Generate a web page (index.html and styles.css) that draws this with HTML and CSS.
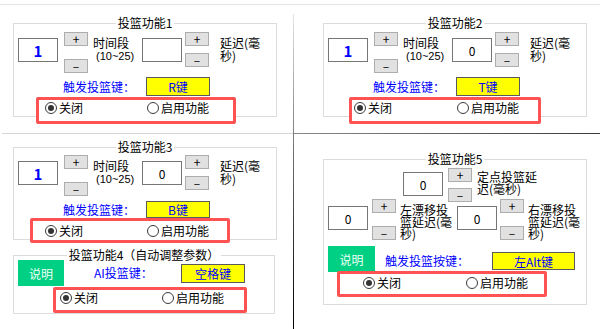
FILE: index.html
```html
<!DOCTYPE html>
<html lang="zh-CN">
<head>
    <meta charset="UTF-8">
    <title>投篮功能</title>
    <link rel="stylesheet" href="styles.css">
</head>
<body>
    <div class="topline"></div>
    <div class="board">
        <div class="cell cell-a">
            <fieldset class="group g1">
                <legend class="title">投篮功能1</legend>
                <div class="spin-row">
                    <div class="num hi">1</div>
                    <div class="spin"><div class="btn">+</div><div class="btn">–</div></div>
                    <div class="lbl">时间段<span class="range">(10~25)</span></div>
                    <div class="num n2"></div>
                    <div class="spin s2"><div class="btn">+</div><div class="btn">–</div></div>
                    <div class="lbl l2">延迟(毫秒)</div>
                </div>
                <div class="trig">
                    <span class="trig-lbl">触发投篮键：</span>
                    <span class="key">R键</span>
                </div>
                <div class="opts">
                    <label class="opt first"><span class="radio on"></span>关闭</label>
                    <label class="opt"><span class="radio"></span>启用功能</label>
                </div>
            </fieldset>
        </div>

        <div class="vline"></div>

        <div class="cell cell-b">
            <fieldset class="group g2">
                <legend class="title">投篮功能2</legend>
                <div class="spin-row">
                    <div class="num hi">1</div>
                    <div class="spin"><div class="btn">+</div><div class="btn">–</div></div>
                    <div class="lbl">时间段<span class="range">(10~25)</span></div>
                    <div class="num n2">0</div>
                    <div class="spin s2"><div class="btn">+</div><div class="btn">–</div></div>
                    <div class="lbl l2">延迟(毫秒)</div>
                </div>
                <div class="trig">
                    <span class="trig-lbl">触发投篮键：</span>
                    <span class="key">T键</span>
                </div>
                <div class="opts">
                    <label class="opt first"><span class="radio on"></span>关闭</label>
                    <label class="opt"><span class="radio"></span>启用功能</label>
                </div>
            </fieldset>
        </div>

        <div class="hline-l"></div>
        <div class="hline-r"></div>

        <div class="cell cell-c">
            <fieldset class="group g3">
                <legend class="title">投篮功能3</legend>
                <div class="spin-row">
                    <div class="num hi">1</div>
                    <div class="spin"><div class="btn">+</div><div class="btn">–</div></div>
                    <div class="lbl">时间段<span class="range">(10~25)</span></div>
                    <div class="num n2">0</div>
                    <div class="spin s2"><div class="btn">+</div><div class="btn">–</div></div>
                    <div class="lbl l2">延迟(毫秒)</div>
                </div>
                <div class="trig">
                    <span class="trig-lbl">触发投篮键：</span>
                    <span class="key">B键</span>
                </div>
                <div class="opts">
                    <label class="opt first"><span class="radio on"></span>关闭</label>
                    <label class="opt"><span class="radio"></span>启用功能</label>
                </div>
            </fieldset>

            <fieldset class="group g4">
                <legend class="title">投篮功能4（自动调整参数）</legend>
                <div class="help-row">
                    <span class="help">说明</span>
                    <span class="trig-lbl">AI投篮键：</span>
                    <span class="key">空格键</span>
                </div>
                <div class="opts">
                    <label class="opt first"><span class="radio on"></span>关闭</label>
                    <label class="opt"><span class="radio"></span>启用功能</label>
                </div>
            </fieldset>
        </div>

        <div class="cell cell-d">
            <fieldset class="group g5">
                <legend class="title">投篮功能5</legend>
                <div class="spin-row row-a">
                    <div class="num">0</div>
                    <div class="spin"><div class="btn">+</div><div class="btn">–</div></div>
                    <div class="lbl">定点投篮延迟(毫秒)</div>
                </div>
                <div class="spin-row row-b">
                    <div class="num">0</div>
                    <div class="spin"><div class="btn">+</div><div class="btn">–</div></div>
                    <div class="lbl">左漂移投篮延迟(毫秒)</div>
                    <div class="num n2">0</div>
                    <div class="spin s2"><div class="btn">+</div><div class="btn">–</div></div>
                    <div class="lbl l2">右漂移投篮延迟(毫秒)</div>
                </div>
                <div class="help-row">
                    <span class="help">说明</span>
                    <span class="trig-lbl">触发投篮按键：</span>
                    <span class="key">左Alt键</span>
                </div>
                <div class="opts">
                    <label class="opt first"><span class="radio on"></span>关闭</label>
                    <label class="opt"><span class="radio"></span>启用功能</label>
                </div>
            </fieldset>
        </div>
    </div>
</body>
</html>
```

FILE: styles.css
```css
* {
    box-sizing: border-box;
}

body {
    margin: 0;
    width: 600px;
    height: 329px;
    overflow: hidden;
    background-color: #ffffff;
    color: #000000;
    font-family: "Noto Sans CJK SC", "Noto Sans", sans-serif;
    font-size: 12px;
}

.topline {
    height: 1px;
    margin-top: 4px;
    background-color: #e4e4e4;
}

.board {
    display: grid;
    grid-template-columns: 293px 1px 306px;
    grid-template-rows: 128px 1px 195px;
}

.vline {
    grid-column: 2;
    grid-row: 1 / 4;
    margin-top: 9px;
    background: linear-gradient(#e4e4e4, #7a7a7a 40%, #2a2a2a 75%, #000000);
}

.hline-l {
    grid-column: 1;
    grid-row: 2;
    margin-left: 2px;
    background-color: #d6d6d6;
}

.hline-r {
    grid-column: 3;
    grid-row: 2;
    background: linear-gradient(to right, #8a8a8a, #3a3a3a);
}

.cell {
    display: flex;
    flex-direction: column;
    align-items: flex-start;
}

.cell-a { grid-column: 1; grid-row: 1; }
.cell-b { grid-column: 3; grid-row: 1; }
.cell-c { grid-column: 1; grid-row: 3; }
.cell-d { grid-column: 3; grid-row: 3; }

/* group box */
.group {
    margin: 0;
    padding: 0;
    min-width: 0;
    width: 264px;
    border: 1px solid #dcdcdc;
    display: flex;
    flex-direction: column;
    align-items: flex-start;
}

.title {
    margin: 0 auto;
    padding: 0 2px;
    line-height: 12px;
    font-size: 12px;
}

.g1 { margin: 12px 0 0 13px; }
.g2 { margin: 12px 0 0 29px; }
.g3 { margin: 7px 0 0 13px; }
.g4 { margin: 9px 0 0 13px; width: 262px; }
.g5 { margin: 19px 0 0 29px; padding-bottom: 7px; }

/* number + spinner rows */
.spin-row {
    display: flex;
    align-items: flex-start;
    margin: 3px 0 0 4px;
}

.g3 .spin-row {
    margin-top: 2px;
}

.num {
    width: 40px;
    height: 24px;
    margin-top: 6px;
    border: 1px solid #767676;
    display: flex;
    align-items: center;
    justify-content: center;
    font-size: 12px;
}

.num.hi {
    color: #0000ff;
    font-weight: bold;
    font-size: 15px;
}

.spin {
    width: 24px;
    height: 41px;
    margin-left: 6px;
    display: flex;
    flex-direction: column;
    justify-content: space-between;
}

.btn {
    height: 14px;
    background-color: #e1e1e1;
    border: 1px solid #adadad;
    font-size: 12px;
    line-height: 12px;
    text-align: center;
}

.lbl {
    width: 48px;
    margin: 4px 0 0 5px;
    line-height: 13px;
}

.range {
    display: block;
    margin: 2px 0 0 3px;
    font-family: "Liberation Sans", sans-serif;
    font-size: 11px;
    line-height: 11px;
}

.num.n2 { margin-left: 1px; }
.spin.s2 { margin-left: 3px; height: 35px; }
.lbl.l2 { margin-left: 11px; }

/* trigger key */
.trig {
    display: flex;
    align-items: center;
    margin: 4px 0 0 49px;
}

.g3 .trig {
    margin-top: 5px;
}

.trig-lbl {
    width: 83px;
    color: #0000ff;
    line-height: 14px;
}

.key {
    width: 64px;
    height: 19px;
    background-color: #ffff00;
    border: 1px solid #5a5a5a;
    color: #0000ff;
    display: flex;
    align-items: center;
    justify-content: center;
}

.g3 .key {
    height: 17px;
}

/* radio group with red highlight */
.opts {
    display: flex;
    align-items: flex-start;
    width: 200px;
    height: 27px;
    margin: 1px 0 -8px 22px;
    padding: 1px 0 0 6px;
    border: 3px solid #ff5252;
    border-radius: 2px;
    background-color: #ffffff;
}

.opt {
    display: flex;
    align-items: center;
    gap: 2px;
    line-height: 14px;
}

.opt.first {
    width: 102px;
}

.radio {
    width: 12px;
    height: 12px;
    border: 1px solid #3a3a3a;
    border-radius: 50%;
    background-color: #ffffff;
    display: flex;
    align-items: center;
    justify-content: center;
}

.radio.on::after {
    content: "";
    width: 6px;
    height: 6px;
    border-radius: 50%;
    background-color: #333333;
}

.g2 .opts {
    width: 192px;
    margin-left: 25px;
    padding-left: 2px;
}

.g2 .opt.first {
    width: 103px;
}

.g3 .opts {
    height: 25px;
    margin: 0 0 -4px 16px;
    padding: 3px 0 0 12px;
}

.g4 .opts {
    width: 194px;
    height: 26px;
    margin: 1px 0 0 39px;
    padding: 1px 0 0 4px;
}

.g5 .opts {
    width: 210px;
    height: 26px;
    margin: -1px 0 0 13px;
    padding: 2px 0 0 23px;
}

.g5 .opt.first {
    width: 103px;
}

/* help button rows */
.help-row {
    display: flex;
    align-items: center;
    margin: -1px 0 0 4px;
}

.help {
    width: 46px;
    height: 26px;
    background-color: #00d084;
    color: #effff7;
    display: flex;
    align-items: center;
    justify-content: center;
}

.g4 .trig-lbl {
    width: 87px;
    margin-left: 30px;
}

/* function 5 layout */
.row-a .num { margin: 4px 0 0 75px; }
.row-a .spin { height: 34px; margin-left: 5px; }
.row-a .lbl { width: 62px; margin: 3px 0 0 5px; line-height: 12px; }

.row-b { margin-top: -3px; }
.row-b .num { margin-top: 7px; }
.row-b .spin { height: 41px; margin-left: 4px; }
.row-b .lbl { width: 56px; margin: 5px 0 0 4px; line-height: 12px; }
.row-b .num.n2 { margin-left: 1px; }
.row-b .spin.s2 { margin-left: 3px; }

.g5 .help-row { margin-top: 6px; }
.g5 .help { width: 47px; }
.g5 .trig-lbl { width: 107px; margin-left: 10px; margin-top: 4px; }
.g5 .key { width: 83px; height: 18px; margin-top: 4px; }
```
